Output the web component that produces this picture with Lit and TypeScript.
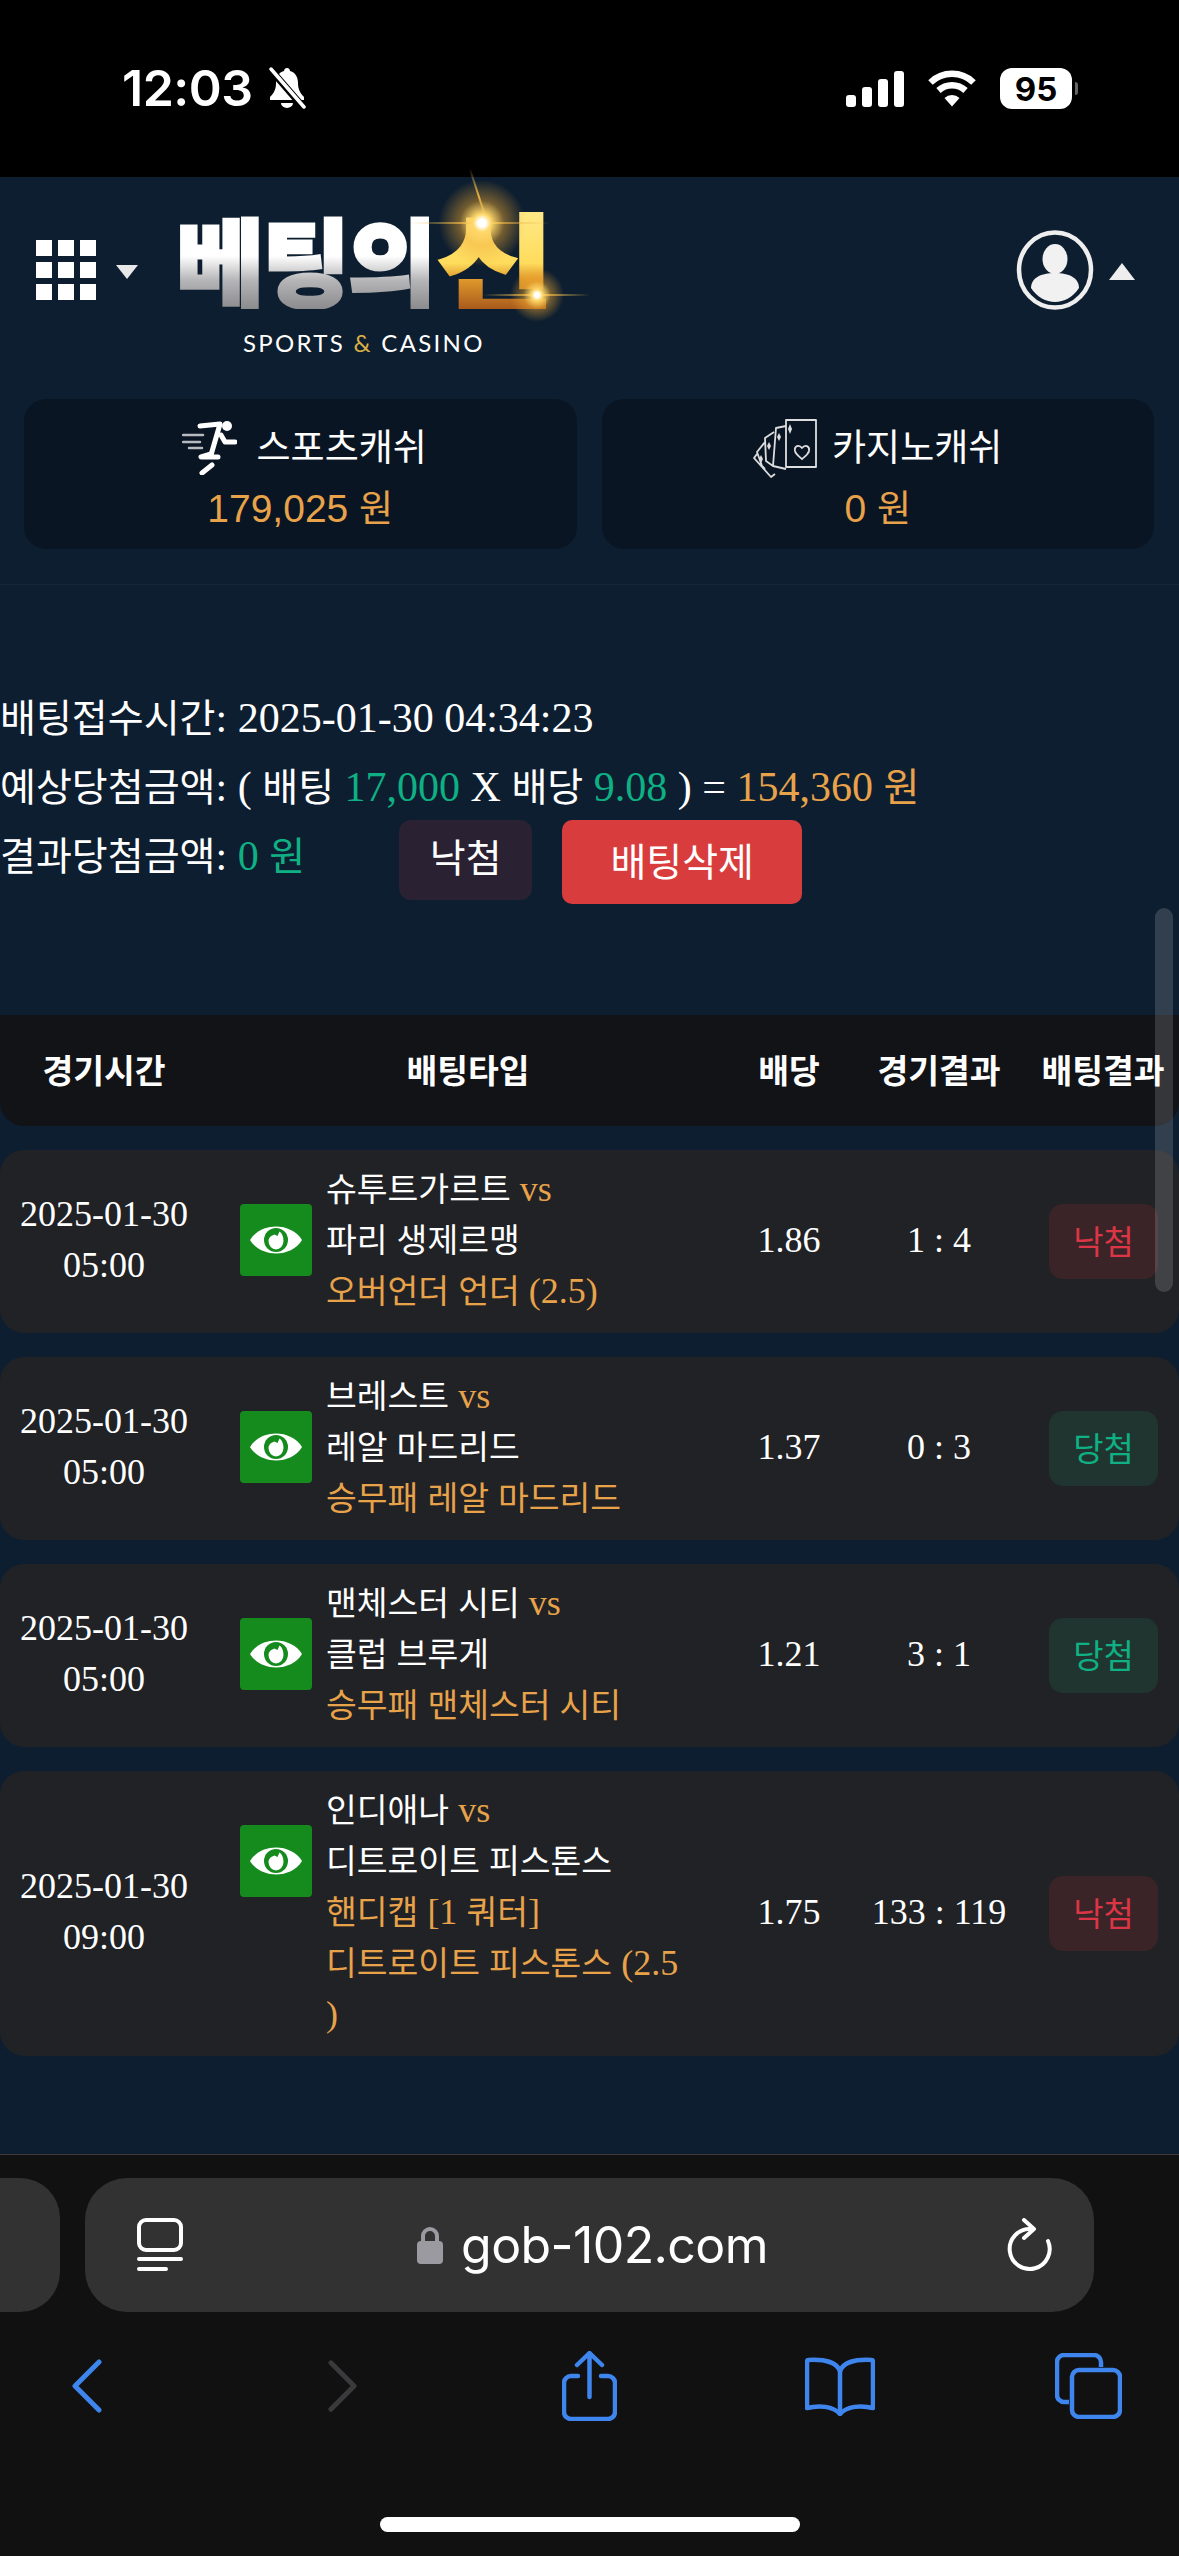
import { LitElement, html, css, svg } from "lit";
import { customElement } from "lit/decorators.js";

const k = (s: string) =>
  s.split(/([\uAC00-\uD7A3]+)/).map((p, i) => (i % 2 ? html`<span class="k">${p}</span>` : p));

interface Row {
  d: string;
  t: string;
  h: string;
  a: string;
  pick: string[];
  odds: string;
  score: string;
  win: boolean;
}

const rows: Row[] = [
  { d: "2025-01-30", t: "05:00", h: "슈투트가르트", a: "파리 생제르맹", pick: ["오버언더 언더 (2.5)"], odds: "1.86", score: "1 : 4", win: false },
  { d: "2025-01-30", t: "05:00", h: "브레스트", a: "레알 마드리드", pick: ["승무패 레알 마드리드"], odds: "1.37", score: "0 : 3", win: true },
  { d: "2025-01-30", t: "05:00", h: "맨체스터 시티", a: "클럽 브루게", pick: ["승무패 맨체스터 시티"], odds: "1.21", score: "3 : 1", win: true },
  { d: "2025-01-30", t: "09:00", h: "인디애나", a: "디트로이트 피스톤스", pick: ["핸디캡 [1 쿼터]", "디트로이트 피스톤스 (2.5 )"], odds: "1.75", score: "133 : 119", win: false },
];

const eye = svg`<svg class="eye-svg" viewBox="0 0 72 72" width="72" height="72">
  <path d="M10 36 C21 18 51 18 62 36 C51 54 21 54 10 36Z" fill="#fff"/>
  <circle cx="36" cy="36" r="12" fill="#158a1d"/>
  <path d="M28.500 37a7.500 8.500 0 0 0 15 0c0-4.500-1.500-8-4-9.500l-2 4.500-3-1.500c-3 1-6 3-6 6.500Z" fill="#fff"/>
</svg>`;

@customElement("app-root")
export class AppRoot extends LitElement {
  static styles = css`
    :host {
      display: flex;
      flex-direction: column;
      position: relative;
      width: 1179px;
      height: 2556px;
      overflow: hidden;
      background: #0d1e30;
      color: #fff;
      font-family: "Liberation Serif", "Noto Sans CJK KR", serif;
      font-size: 36px;
    }
    .k {
      font-family: "Noto Sans CJK KR", sans-serif;
      font-size: 0.93em;
      line-height: 1;
    }
    svg {
      display: block;
      flex: none;
    }
    .status {
      height: 177px;
      flex: none;
      background: #000;
      display: flex;
      align-items: flex-start;
      padding: 59px 107px 0 122px;
      box-sizing: border-box;
      font-family: Inter, "Liberation Sans", sans-serif;
    }
    .time {
      font-size: 50px;
      line-height: 58px;
      font-weight: 600;
      letter-spacing: -0.5px;
      width: 145px;
    }
    .bell {
      margin-top: 8px;
    }
    .status-right {
      margin-left: auto;
      display: flex;
      align-items: center;
      gap: 23px;
      margin-top: 9px;
    }
    .battery {
      width: 72px;
      height: 41px;
      border-radius: 12px;
      background: #fff;
      color: #000;
      font-size: 33px;
      font-weight: 700;
      display: flex;
      align-items: center;
      justify-content: center;
      position: relative;
    }
    .battery::after {
      content: "";
      position: absolute;
      right: -6px;
      top: 14px;
      width: 3px;
      height: 13px;
      border-radius: 0 3px 3px 0;
      background: #666;
    }
    .page {
      flex: 1;
      display: flex;
      flex-direction: column;
      min-height: 0;
    }
    .head {
      height: 222px;
      flex: none;
      display: flex;
      align-items: flex-start;
      padding-left: 36px;
      box-sizing: border-box;
      position: relative;
    }
    .grid-ic {
      margin-top: 63px;
    }
    .caret-d {
      margin: 88px 0 0 20px;
    }
    .logo {
      margin: 37px 0 0 38px;
      width: 383px;
      position: relative;
    }
    .word {
      display: flex;
      height: 102px;
      align-items: center;
      font-family: "Noto Sans CJK KR", sans-serif;
      font-weight: 900;
      font-size: 96px;
      line-height: 102px;
      letter-spacing: -2.300px;
      white-space: nowrap;
      margin-top: -7px;
    }
    .word span {
      background-clip: text;
      -webkit-background-clip: text;
      color: transparent;
      -webkit-text-stroke: 3px transparent;
    }
    .w1 {
      background-image: linear-gradient(180deg, #fff 0%, #fff 48%, #b5b5b7 72%, #8b8b8d 100%);
    }
    .w2 {
      margin-left: 3px;
      font-size: 108px;
      transform: scaleX(1.18);
      transform-origin: left center;
      background-image: linear-gradient(180deg, #ffe98a 0%, #fedc5c 55%, #e09b2c 70%, #a95a1c 100%);
    }
    .sub {
      margin: 19px 0 0 67px;
      font-family: Lato, Inter, sans-serif;
      font-size: 24px;
      line-height: 30px;
      letter-spacing: 2.3px;
      white-space: nowrap;
    }
    .sub b {
      font-weight: 400;
      color: #d9ae45;
    }
    .flare {
      position: absolute;
      pointer-events: none;
      background: radial-gradient(circle, #fff 0 6%, #ffd86a 14%, rgba(240, 170, 50, 0.45) 35%, transparent 68%);
      border-radius: 50%;
    }
    .flare.a {
      left: 261px;
      top: -36px;
      width: 90px;
      height: 90px;
    }
    .flare.b {
      left: 333px;
      top: 53px;
      width: 56px;
      height: 56px;
    }
    .ray {
      position: absolute;
      height: 2px;
      pointer-events: none;
      background: linear-gradient(90deg, transparent, #e8b850, transparent);
    }
    .ray.a {
      left: 234px;
      top: 8px;
      width: 140px;
    }
    .ray.b {
      left: 307px;
      top: 80px;
      width: 107px;
    }
    .ray.c {
      left: 273px;
      top: -18px;
      width: 60px;
      transform: rotate(72deg);
    }
    .profile {
      margin: 53px 0 0 auto;
    }
    .caret-u {
      margin: 86px 44px 0 15px;
    }
    .cards {
      display: flex;
      gap: 25px;
      padding: 0 25px 0 24px;
      flex: none;
    }
    .card {
      height: 150px;
      flex: 1;
      border-radius: 22px;
      background: #0a1524;
      display: flex;
      flex-direction: column;
      align-items: center;
      font-family: "Liberation Sans", "Noto Sans CJK KR", sans-serif;
      font-size: 39px;
      line-height: 60px;
    }
    .card .k {
      font-size: 0.95em;
    }
    .card-title {
      display: flex;
      align-items: center;
      gap: 22px;
      height: 80px;
      margin-top: 9px;
      margin-bottom: -4px;
    }
    .card-title.sports {
      padding-left: 8px;
      gap: 20px;
    }
    .card-title.casino {
      gap: 15px;
    }
    .card-value {
      color: #e8a24a;
      line-height: 50px;
    }
    .rule {
      height: 1px;
      flex: none;
      margin-top: 35px;
      background: rgba(255, 255, 255, 0.04);
    }
    .info {
      margin-top: 99px;
      font-size: 42px;
      line-height: 69px;
      flex: none;
    }
    .line {
      white-space: nowrap;
      height: 69px;
    }
    .g {
      color: #0fb083;
    }
    .o {
      color: #e8a24a;
    }
    .line3 {
      display: flex;
      align-items: flex-start;
    }
    .btn {
      font-family: "Noto Sans CJK KR", sans-serif;
      font-size: 39px;
      display: flex;
      align-items: center;
      justify-content: center;
      border-radius: 12px;
      margin-top: -2px;
      box-sizing: border-box;
    }
    .btn.lost {
      margin-left: 94px;
      width: 133px;
      height: 80px;
      padding-bottom: 9px;
      background: #2a2233;
    }
    .btn.del {
      margin-left: 30px;
      width: 240px;
      height: 84px;
      padding-bottom: 5px;
      background: #d83c3c;
      border-radius: 10px;
    }
    .thead,
    .row {
      display: grid;
      grid-template-columns: 208px 512px 138px 162px 159px;
      flex: none;
    }
    .thead {
      margin-top: 124px;
      height: 111px;
      background: #111317;
      border-radius: 0 0 24px 24px;
      align-items: center;
      text-align: center;
      font-weight: 700;
      font-size: 36px;
    }
    .thead .k {
      font-weight: 700;
    }
    .pad-type {
      padding-left: 8px;
    }
    .pad-end {
      padding-left: 7px;
      white-space: nowrap;
    }
    .list {
      margin-top: 24px;
      display: flex;
      flex-direction: column;
      gap: 24px;
    }
    .row {
      background: #202226;
      border-radius: 24px;
      line-height: 51px;
      align-items: center;
      text-align: center;
    }
    .num {
      padding-bottom: 3px;
    }
    .type {
      display: flex;
      align-items: flex-start;
      gap: 14px;
      padding-left: 32px;
      text-align: left;
      padding-top: 14px;
      padding-bottom: 16px;
    }
    .eye {
      width: 72px;
      height: 72px;
      flex: none;
      margin-top: 40px;
      background: #158a1d;
      border-radius: 4px;
    }
    .teams {
      width: 362px;
    }
    .badge {
      justify-self: end;
      margin-right: 21px;
      width: 109px;
      height: 75px;
      border-radius: 14px;
      display: flex;
      align-items: center;
      justify-content: center;
      font-family: "Noto Sans CJK KR", sans-serif;
      font-size: 33px;
      padding-bottom: 3px;
      box-sizing: border-box;
    }
    .badge.lose {
      background: #3a2428;
      color: #dc3545;
    }
    .badge.win {
      background: #20352f;
      color: #0fb083;
    }
    .scroll {
      position: absolute;
      left: 1155px;
      top: 908px;
      width: 18px;
      height: 384px;
      border-radius: 9px;
      background: rgba(255, 255, 255, 0.15);
    }
    .bar {
      height: 402px;
      flex: none;
      background: #111;
      border-top: 1px solid #3a3a3c;
      box-sizing: border-box;
      padding-top: 23px;
      font-family: Inter, "Liberation Sans", sans-serif;
    }
    .url-row {
      display: flex;
      gap: 25px;
      height: 134px;
    }
    .stub {
      width: 60px;
      background: #323232;
      border-radius: 0 40px 40px 0;
    }
    .url {
      width: 1009px;
      background: #323232;
      border-radius: 42px;
      display: flex;
      align-items: center;
      justify-content: space-between;
      padding: 0 42px 0 52px;
      box-sizing: border-box;
    }
    .addr {
      display: flex;
      align-items: center;
      gap: 18px;
      font-size: 50px;
      letter-spacing: -0.6px;
      margin-right: 5px;
    }
    .nav {
      display: grid;
      grid-template-columns: 257px 234px 243px 250px auto;
      align-items: center;
      padding-left: 71px;
      height: 70px;
      margin-top: 39px;
    }
    .home {
      width: 420px;
      height: 15px;
      border-radius: 8px;
      background: #fff;
      margin: 96px auto 0;
    }
  `;

  render() {
    return html`
      <div class="status">
        <div class="time">12:03</div>
        <svg class="bell" width="40" height="42" viewBox="0 0 40 42">
          <path d="M20 1c2 0 3 1.500 3 3 6 1.500 8 7 8 12 0 6 2 10 6 14v3H3v-3c4-4 6-8 6-14 0-5 2-10.500 8-12 0-1.500 1-3 3-3Z" fill="#fff"/>
          <path d="M14 36h12a6 5 0 0 1-12 0Z" fill="#fff"/>
          <path d="M4 3l32 37" stroke="#000" stroke-width="7"/>
          <path d="M4 2l33 38" stroke="#fff" stroke-width="3.500" stroke-linecap="round"/>
        </svg>
        <div class="status-right">
          <svg width="58" height="36" viewBox="0 0 58 36" fill="#fff">
            <rect x="0" y="24" width="10" height="12" rx="3"/>
            <rect x="16" y="16" width="10" height="20" rx="3"/>
            <rect x="32" y="8" width="10" height="28" rx="3"/>
            <rect x="48" y="0" width="10" height="36" rx="3" />
          </svg>
          <svg width="50" height="37" viewBox="0 0 50 37" fill="none" stroke="#fff" stroke-width="6.500">
            <path d="M3.500 12.500a31 31 0 0 1 43 0"/>
            <path d="M11.500 20.500a20 20 0 0 1 27 0"/>
            <path d="M25 36.500l-7.500-8.500a11 11 0 0 1 15 0Z" fill="#fff" stroke="none"/>
          </svg>
          <div class="battery">95</div>
        </div>
      </div>

      <div class="page">
        <div class="head">
          <svg class="grid-ic" width="60" height="60" viewBox="0 0 60 60" fill="#fff">
            ${[0, 22, 44].map((y) =>
              [0, 22, 44].map((x) => svg`<rect x=${x} y=${y} width="16" height="16"/>`)
            )}
          </svg>
          <svg class="caret-d" width="22" height="14" viewBox="0 0 22 14"><path d="M0 0h22L11 14Z" fill="#e8e8e8"/></svg>
          <div class="logo">
            <div class="word"><span class="w1">베팅의</span><span class="w2">신</span></div>
            <div class="sub">SPORTS <b>&amp;</b> CASINO</div>
            <div class="ray a"></div>
            <div class="ray b"></div>
            <div class="ray c"></div>
            <div class="flare a"></div>
            <div class="flare b"></div>
          </div>
          <svg class="profile" width="78" height="80" viewBox="0 0 78 80">
            <ellipse cx="39" cy="40" rx="36" ry="37.500" fill="none" stroke="#eee" stroke-width="4.500"/>
            <ellipse cx="39" cy="29" rx="12.500" ry="15" fill="#f1f1f1"/>
            <path d="M15 58c0-10 10-15 24-15s24 5 24 15c-6 9-15 14-24 14s-18-5-24-14Z" fill="#f1f1f1"/>
          </svg>
          <svg class="caret-u" width="26" height="17" viewBox="0 0 26 17"><path d="M0 17h26L13 0Z" fill="#eee"/></svg>
        </div>

        <div class="cards">
          <div class="card">
            <div class="card-title sports">
              <svg width="55" height="54" viewBox="0 0 55 54" fill="none" stroke="#fff" stroke-linecap="round" stroke-linejoin="round">
                <circle cx="45" cy="5" r="5" fill="#fff" stroke="none"/>
                <path d="M18 5l20-2-9 31M39 14l4 7h10" stroke-width="5"/>
                <path d="M29 33L19 36h17" stroke-width="5"/>
                <path d="M30 44L20 52" stroke-width="5"/>
                <path d="M1 14h20M1 21h17M7 27h13" stroke-width="2.500" opacity=".7"/>
              </svg>
              <span>${k("스포츠캐쉬")}</span>
            </div>
            <div class="card-value">${k("179,025 원")}</div>
          </div>
          <div class="card">
            <div class="card-title casino">
              <svg width="64" height="60" viewBox="0 0 64 60" fill="none" stroke="#ddd" stroke-width="1.800" stroke-linejoin="round">
                <path d="M33 2h30v47H33Z"/>
                <path d="M33 8l-10 2-3 38 13 3M21 14l-9 6 1 23 7 5M12 24l-8 10 5 14 3 3M4 36l-3 4 17 19 4-3"/>
                <path d="M49 30c-3-4-8-2-7 3 1 4 5 6 7 8 2-2 6-4 7-8 1-5-4-7-7-3Z"/>
                <path d="M37 6l2 5-2 5-2-5Z" fill="#ddd" stroke="none"/>
                <path d="M26 15l2 4-2 4-2-4ZM16 24l2 4-2 4-2-4ZM8 37l2 4-2 4-2-4Z" fill="#ddd" stroke="none"/>
              </svg>
              <span>${k("카지노캐쉬")}</span>
            </div>
            <div class="card-value">${k("0 원")}</div>
          </div>
        </div>
        <div class="rule"></div>

        <div class="info">
          <div class="line">${k("배팅접수시간: 2025-01-30 04:34:23")}</div>
          <div class="line">
            ${k("예상당첨금액: ( 배팅 ")}<span class="g">17,000</span> X ${k("배당 ")}<span class="g">9.08</span> ) =
            <span class="o">${k("154,360 원")}</span>
          </div>
          <div class="line line3">
            <span>${k("결과당첨금액: ")}<span class="g">${k("0 원")}</span></span>
            <div class="btn lost">낙첨</div>
            <div class="btn del">배팅삭제</div>
          </div>
        </div>

        <div class="thead">
          <div>${k("경기시간")}</div>
          <div class="pad-type">${k("배팅타입")}</div>
          <div>${k("배당")}</div>
          <div>${k("경기결과")}</div>
          <div class="pad-end">${k("배팅결과")}</div>
        </div>

        <div class="list">
          ${rows.map(
            (r) => html`
              <div class="row">
                <div class="num">${r.d}<br />${r.t}</div>
                <div class="type">
                  <div class="eye">${eye}</div>
                  <div class="teams">
                    <div>${k(r.h)} <span class="o">vs</span></div>
                    <div>${k(r.a)}</div>
                    ${r.pick.map((p) => html`<div class="o">${k(p)}</div>`)}
                  </div>
                </div>
                <div class="num">${r.odds}</div>
                <div class="num">${r.score}</div>
                <div class="badge ${r.win ? "win" : "lose"}">${r.win ? "당첨" : "낙첨"}</div>
              </div>
            `
          )}
        </div>
      </div>

      <div class="scroll"></div>

      <div class="bar">
        <div class="url-row">
          <div class="stub"></div>
          <div class="url">
            <svg width="46" height="54" viewBox="0 0 46 54" fill="none" stroke="#fff" stroke-width="4" stroke-linecap="round">
              <rect x="2" y="2" width="42" height="30" rx="7"/>
              <path d="M2 41h42M2 51h27"/>
            </svg>
            <div class="addr">
              <svg width="26" height="38" viewBox="0 0 26 38">
                <path d="M6 16V10a7 7 0 0 1 14 0v6" fill="none" stroke="#9a9aa0" stroke-width="4"/>
                <rect x="0" y="15" width="26" height="23" rx="4" fill="#9a9aa0"/>
              </svg>
              <span>gob-102.com</span>
            </div>
            <svg width="45" height="54" viewBox="0 0 45 54" fill="none" stroke="#fff" stroke-width="4" stroke-linecap="round" stroke-linejoin="round">
              <path d="M23 11A20 20 0 1 0 41 23"/>
              <path d="M17 2l10 9-10 9" />
            </svg>
          </div>
        </div>
        <div class="nav">
          <svg width="31" height="54" viewBox="0 0 31 54" fill="none" stroke="#3f85ee" stroke-width="5" stroke-linecap="round" stroke-linejoin="round">
            <path d="M28 3L4 27l24 24"/>
          </svg>
          <svg width="30" height="54" viewBox="0 0 31 54" fill="none" stroke="#3a3a3c" stroke-width="5" stroke-linecap="round" stroke-linejoin="round">
            <path d="M3 3l24 24L3 51"/>
          </svg>
          <svg width="55" height="70" viewBox="0 0 55 70" fill="none" stroke="#3f85ee" stroke-width="4.500" stroke-linecap="round" stroke-linejoin="round">
            <path d="M16 25H9a7 7 0 0 0-7 7v29a7 7 0 0 0 7 7h37a7 7 0 0 0 7-7V32a7 7 0 0 0-7-7h-7"/>
            <path d="M27.500 46V3M15 14L27.500 2 40 14"/>
          </svg>
          <svg width="70" height="59" viewBox="0 0 70 59" fill="none" stroke="#3f85ee" stroke-width="4.500" stroke-linecap="round" stroke-linejoin="round">
            <path d="M35 14C31 5 21 2 3 3c-1 0-1 1-1 2v46c12-3 26-2 33 6 7-8 21-9 33-6V5c0-1 0-2-1-2-18-1-28 2-32 11Z"/>
            <path d="M35 14v42"/>
          </svg>
          <svg width="67" height="66" viewBox="0 0 67 66" fill="none" stroke="#3f85ee" stroke-width="4.500" stroke-linejoin="round">
            <path d="M14 49H9a7 7 0 0 1-7-7V9a7 7 0 0 1 7-7h30a7 7 0 0 1 7 7v5"/>
            <rect x="17" y="17" width="48" height="47" rx="7"/>
          </svg>
        </div>
        <div class="home"></div>
      </div>
    `;
  }
}
